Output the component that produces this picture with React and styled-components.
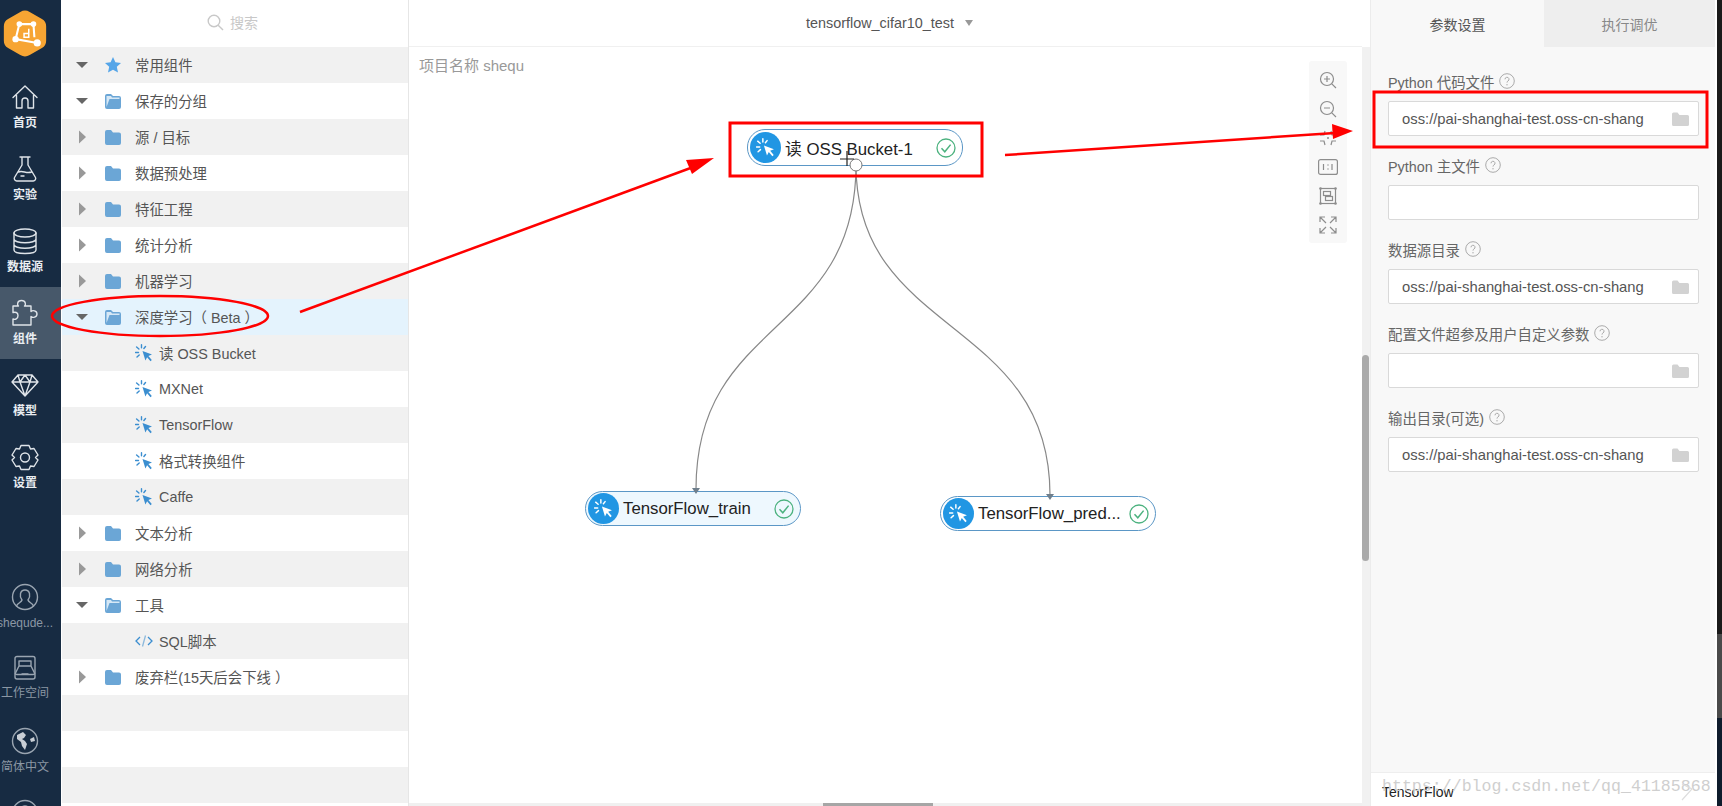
import React from 'react';
import styled, {createGlobalStyle} from 'styled-components';

const FONT = `"Liberation Sans", "Noto Sans CJK SC", sans-serif`;

const Global = createGlobalStyle`
  html, body { margin: 0; padding: 0; background: #fff; overflow: hidden; }
  body { font-family: ${FONT}; }
`;

const Page = styled.div`
  position: relative;
  width: 1722px;
  height: 806px;
  display: flex;
  overflow: hidden;
  background: #fff;
`;

/* left navy rail */
const Rail = styled.nav`
  width: 61px;
  flex: none;
  height: 806px;
  background: #172b42;
  display: flex;
  flex-direction: column;
  align-items: stretch;
  overflow: hidden;
`;
const Logo = styled.div`
  height: 71px;
  flex: none;
  padding: 10px 11px 0 0;
  box-sizing: border-box;
  display: flex;
  justify-content: center;
`;
const RailItem = styled.div`
  height: 72px;
  flex: none;
  box-sizing: border-box;
  padding: 12px 11px 0 0;
  display: flex;
  flex-direction: column;
  align-items: center;
  gap: 5px;
  line-height: 14px;
  background: ${p => (p.$active ? '#47586a' : 'transparent')};
  color: ${p => (p.$dim ? '#8b97a4' : '#e9edf1')};
  font-size: 12px;
  font-weight: ${p => (p.$dim ? 400 : 700)};
  white-space: nowrap;
`;
const RailSpacer = styled.div`
  height: 68px;
  flex: none;
`;

/* component tree */
const Tree = styled.aside`
  width: 347px;
  flex: none;
  margin-left: 1px;
  box-sizing: border-box;
  border-right: 1px solid #e6e6e6;
  display: flex;
  flex-direction: column;
  background: #fff;
`;
const SearchBar = styled.div`
  height: 47px;
  flex: none;
  box-sizing: border-box;
  display: flex;
  align-items: center;
  justify-content: center;
  gap: 6px;
  color: #c8c8c8;
  font-size: 14px;
  padding: 0 5px 3px 0;
`;
const Row = styled.div`
  height: 36px;
  flex: none;
  box-sizing: border-box;
  display: flex;
  align-items: center;
  font-size: 14.4px;
  color: #555;
  white-space: nowrap;
  background: ${p => (p.$active ? '#e4f3fd' : p.$odd ? '#f1f1f1' : '#fff')};
  padding-left: ${p => (p.$child ? 73 : 13)}px;
  padding-bottom: 1px;
`;
const Caret = styled.span`
  width: 14px;
  height: 14px;
  flex: none;
  margin-right: 15px;
  display: flex;
  align-items: center;
  justify-content: center;
`;
const RowIcon = styled.span`
  width: 18px;
  height: 18px;
  flex: none;
  margin-right: 13px;
  display: flex;
  align-items: center;
  justify-content: center;
`;
const ChildIcon = styled.span`
  width: 18px;
  height: 18px;
  flex: none;
  margin-right: 6px;
  display: flex;
  align-items: center;
  justify-content: center;
`;

/* middle work area */
const Main = styled.main`
  width: 953px;
  flex: none;
  display: flex;
  flex-direction: column;
`;
const TitleBar = styled.div`
  height: 47px;
  flex: none;
  border-bottom: 1px solid #f0f0f0;
  box-sizing: border-box;
  display: flex;
  align-items: center;
  justify-content: center;
  gap: 11px;
  font-size: 14.4px;
  color: #555;
  padding-left: 8px;
`;
const Canvas = styled.div`
  position: relative;
  flex: 1;
`;
const ProjectName = styled.div`
  padding: 7px 0 0 10px;
  font-size: 15px;
  color: #999;
`;
const ToolBox = styled.div`
  position: absolute;
  left: 900px;
  top: 14px;
  width: 38px;
  height: 182px;
  background: #f8f8f8;
  border-radius: 3px;
  display: flex;
  flex-direction: column;
  align-items: center;
  padding-top: 4px;
  box-sizing: border-box;
`;
const ToolCell = styled.div`
  height: 29px;
  flex: none;
  display: flex;
  align-items: center;
  justify-content: center;
`;
const Node = styled.div`
  position: absolute;
  left: ${p => p.$x}px;
  top: ${p => p.$y}px;
  width: 216px;
  height: ${p => p.$h}px;
  box-sizing: border-box;
  border: 1px solid #5b97c6;
  border-radius: 18px;
  background: ${p => p.$bg || '#fff'};
  display: flex;
  align-items: center;
  padding: 0 6px 0 2px;
  font-size: 16.8px;
  color: #222;
  white-space: nowrap;
`;
const NodeBadge = styled.span`
  width: 31px;
  height: 31px;
  border-radius: 50%;
  background: #2196e3;
  flex: none;
  display: flex;
  align-items: center;
  justify-content: center;
  margin-right: 4px;
`;
const NodeLabel = styled.span`
  flex: 1;
  min-width: 0;
`;
const Wires = styled.svg`
  position: absolute;
  left: 0;
  top: 0;
  pointer-events: none;
`;
const BottomTrack = styled.div`
  position: absolute;
  left: 0;
  right: 0;
  bottom: 0;
  height: 3px;
  background: #f0f0f0;
`;
const BottomThumb = styled.div`
  width: 110px;
  height: 3px;
  margin-left: 414px;
  background: #a6a6a6;
`;

/* canvas scrollbar strip */
const ScrollTrack = styled.div`
  width: 8px;
  flex: none;
  margin-top: 47px;
  background: #f1f1f1;
  padding-top: 308px;
  box-sizing: border-box;
`;
const ScrollThumb = styled.div`
  width: 7px;
  height: 206px;
  border-radius: 4px;
  background: #aaa;
`;

/* right panel */
const Panel = styled.section`
  width: 345px;
  flex: none;
  margin-right: 2px;
  background: #f8f8f8;
  display: flex;
  flex-direction: column;
  border-left: 1px solid #ececec;
  box-sizing: border-box;
`;
const Tabs = styled.div`
  height: 47px;
  flex: none;
  display: flex;
`;
const Tab = styled.div`
  flex: ${p => (p.$on ? '0 0 173px' : 1)};
  display: flex;
  align-items: center;
  justify-content: center;
  font-size: 14px;
  color: ${p => (p.$on ? '#555' : '#888')};
  background: ${p => (p.$on ? '#f8f8f8' : '#eee')};
`;
const Form = styled.div`
  flex: 1;
  padding: 22px 16px 0 17px;
  display: flex;
  flex-direction: column;
`;
const Field = styled.div`
  height: 84px;
  flex: none;
`;
const Label = styled.div`
  height: 24px;
  display: flex;
  align-items: center;
  gap: 5px;
  font-size: 14.4px;
  color: #666;
  margin-bottom: 8px;
`;
const Input = styled.div`
  height: 35px;
  box-sizing: border-box;
  background: #fff;
  border: 1px solid #d9d9d9;
  border-radius: 2px;
  display: flex;
  align-items: center;
  padding: 0 9px 0 13px;
  font-size: 14.8px;
  color: #555;
  white-space: nowrap;
`;
const InputIcon = styled.span`
  margin-left: auto;
  display: flex;
`;
const Footer = styled.div`
  position: relative;
  height: 34px;
  flex: none;
  background: #fff;
  border-top: 1px solid #eee;
  box-sizing: border-box;
  display: flex;
  align-items: center;
  padding: 4px 0 0 11px;
  font-size: 14px;
  color: #222;
`;
const Watermark = styled.span`
  position: absolute;
  left: 11px;
  top: 0;
  font-family: "Liberation Mono", monospace;
  font-size: 16.6px;
  color: #cfcfcf;
  line-height: 28px;
  white-space: nowrap;
`;
const WaterChevron = styled.svg`
  position: absolute;
  left: 310px;
  top: 10px;
`;
const EdgeStrip = styled.div`
  width: 5px;
  flex: none;
  background: linear-gradient(#1a1a1a 0, #1a1a1a 634px, #4a4a4a 634px, #4a4a4a 718px, #0f1c2c 718px);
`;
const Overlay = styled.svg`
  position: absolute;
  left: 0;
  top: 0;
  pointer-events: none;
`;

const Svg = ({w, h = w, box, children}) => (
  <svg width={w} height={h} viewBox={box || `0 0 ${w} ${h}`} fill="none">{children}</svg>
);

const CaretIcon = ({open}) => open
  ? <Svg w={14}><path d="M1 4h12L7 10z" fill="#666"/></Svg>
  : <Svg w={14}><path d="M4 0.5l7 6.5-7 6.5z" fill="#999"/></Svg>;

const Folder = ({open}) => open
  ? <Svg w={18} h={16}>
      <path d="M1 3a2 2 0 0 1 2-2h4l2 2h6a2 2 0 0 1 2 2v9a2 2 0 0 1-2 2H3a2 2 0 0 1-2-2z" fill="#6ba6d6"/>
      <path d="M2.500 14V3h4.500l1 1.500h7.500V6H5.500z" fill="#d6e8f6"/>
    </Svg>
  : <Svg w={18} h={16}>
      <path d="M1 3a2 2 0 0 1 2-2h4l2 2.500h6a2 2 0 0 1 2 2V14a2 2 0 0 1-2 2H3a2 2 0 0 1-2-2z" fill="#6ba6d6"/>
    </Svg>;

const Star = () => (
  <Svg w={18}><path d="M9 1l2.400 5.300 5.600.6-4.200 3.900 1.200 5.700L9 13.700l-5 2.800 1.200-5.700L1 6.900l5.600-.6z" fill="#55a5e8"/></Svg>
);

const Cursor = ({color = '#3b8ed0', spark = '#3b8ed0', size = 18}) => (
  <Svg w={size} box="0 0 18 18">
    <path d="M7.500 7l9.500 3.600-3.600 1.500 3.400 4-1.300 1.100-3.400-4-1.700 3.400z" fill={color}/>
    <path d="M6.500 0.800v3M1.600 3l2.300 2M0.500 8.500h3M2 13l2.200-2M10.500 2.500l-1.600 2" stroke={spark} strokeWidth="1.400" strokeLinecap="round"/>
  </Svg>
);

const Code = () => (
  <Svg w={18} h={14}>
    <path d="M5 3L1 7l4 4M13 3l4 4-4 4" stroke="#3b8ed0" strokeWidth="1.300"/>
    <path d="M10.500 1.500l-3 11" stroke="#8cb9dc" strokeWidth="1.300"/>
  </Svg>
);

const Check = () => (
  <Svg w={20}>
    <circle cx="10" cy="10" r="9" stroke="#4cb27f" strokeWidth="1.300"/>
    <path d="M5.500 10.200l3.300 3.600 5.800-7.200" stroke="#4cb27f" strokeWidth="1.500"/>
  </Svg>
);

const Help = () => (
  <Svg w={16}>
    <circle cx="8" cy="8" r="7.300" stroke="#aaa" strokeWidth="1"/>
    <path d="M6 6.300a2 2 0 1 1 3 1.700c-.7.4-1 .8-1 1.600" stroke="#aaa" strokeWidth="1"/>
    <circle cx="8" cy="11.800" r=".7" fill="#aaa"/>
  </Svg>
);

const GrayFolder = () => (
  <Svg w={17} h={14}>
    <path d="M0 2a1.500 1.500 0 0 1 1.500-1.500h4L7.500 3h8A1.500 1.500 0 0 1 17 4.500v8a1.500 1.500 0 0 1-1.500 1.500h-14A1.500 1.500 0 0 1 0 12.500z" fill="#d2d2d2"/>
  </Svg>
);

const railStroke = {stroke: '#dfe4e9', strokeWidth: 1.400, fill: 'none', strokeLinejoin: 'round', strokeLinecap: 'round'};
const dimStroke = {...railStroke, stroke: '#9aa5b1'};

const HomeIcon = () => (
  <Svg w={28}>
    <path d="M2 14.500L14 3l12 11.500M5.500 12.500V25h5.500v-7a3 3 0 0 1 6 0v7h5.500V12.500" {...railStroke}/>
  </Svg>
);
const FlaskIcon = () => (
  <Svg w={28}>
    <path d="M9 2h10M11 2v8L3.500 22.500A2.500 2.500 0 0 0 6 26h16a2.500 2.500 0 0 0 2.500-3.500L17 10V2M7.500 17c4-2 8 2 13 0M10 21h3" {...railStroke}/>
  </Svg>
);
const DbIcon = () => (
  <Svg w={28}>
    <ellipse cx="14" cy="6" rx="11" ry="4" {...railStroke}/>
    <path d="M3 6v17c0 2.200 5 3.500 11 3.500s11-1.300 11-3.500V6M3 12c0 2.200 5 3.800 11 3.800s11-1.600 11-3.800M3 17.500c0 2.200 5 3.800 11 3.800s11-1.600 11-3.800" {...railStroke}/>
  </Svg>
);
const PuzzleIcon = () => (
  <Svg w={28}>
    <path d="M2 7h5.500c-1.500-1-1.500-5.500 3-5.500s4.500 4.500 3 5.500H20v5.500c1.500-1.500 6-1 6 2.500s-4.500 4-6 2.500V26H2v-6c2 1 5 0 5-3.500s-3-3.500-5-3z" {...railStroke}/>
  </Svg>
);
const GemIcon = () => (
  <Svg w={28}>
    <path d="M7 4h14l6 7-13 14L1 11zM1 11h26M9 11l5 14 5-14M7 4l2 7 5-7 5 7 2-7" {...railStroke}/>
  </Svg>
);
const GearIcon = () => (
  <Svg w={28}>
    <path d="M10 2.500h8l1.500 3.500 3.500-.5 4 6.500-2.500 2.500 2.500 2.500-4 6.500-3.500-.5-1.500 3.500h-8l-1.500-3.500-3.500.5-4-6.500 2.500-2.500-2.500-2.500 4-6.500 3.500.5z" {...railStroke}/>
    <circle cx="14" cy="14.500" r="4.500" {...railStroke}/>
  </Svg>
);
const UserIcon = () => (
  <Svg w={28}>
    <circle cx="14" cy="14" r="12.500" {...dimStroke}/>
    <path d="M5.500 23c1-3 5-3.500 5.500-6-3-4-2-10 3-10s6 6 3 10c.5 2.500 4.500 3 5.500 6" {...dimStroke}/>
  </Svg>
);
const WorkIcon = () => (
  <Svg w={26}>
    <rect x="3" y="1.500" width="20" height="18" rx="2" {...dimStroke}/>
    <path d="M7 6h12v5H7zM7 11l-4 8M19 11l4 8M3 19v3a2 2 0 0 0 2 2h16a2 2 0 0 0 2-2v-3M10 19h6" {...dimStroke}/>
  </Svg>
);
const GlobeIcon = () => (
  <Svg w={28}>
    <circle cx="14" cy="14" r="12.500" {...dimStroke}/>
    <path d="M6 8l6-3 3 3-2 3-2 1 3 2 2 3-2 6-3-4-1-4-4-3zM19 12l4-2 1 4-4 1z" fill="#c8ced5"/>
  </Svg>
);

const LogoIcon = () => (
  <Svg w={44} h={47} box="0 0 46 50">
    <path d="M18 2a10 10 0 0 1 10 0l13 7.500a9 9 0 0 1 4.500 8v15a9 9 0 0 1-4.500 8L28 48a10 10 0 0 1-10 0L5 40.500a9 9 0 0 1-4.500-8v-15a9 9 0 0 1 4.500-8z" fill="#f7a533"/>
    <path d="M17 15h15l1 14M17 15l-4 16 23 4" stroke="#fff" strokeWidth="2.200"/>
    <path d="M27 20v9h-5v-4h5" stroke="#fff" strokeWidth="1.600"/>
    <circle cx="17" cy="15" r="3" fill="#fff"/>
    <circle cx="32" cy="15" r="3" fill="#fff"/>
    <circle cx="13" cy="31" r="3.400" fill="#fff"/>
    <circle cx="36" cy="35" r="3.800" fill="#fff"/>
  </Svg>
);

const toolStroke = {stroke: '#8d8d8d', strokeWidth: 1.200, fill: 'none'};
const tools = [
  <Svg w={18}><circle cx="8" cy="8" r="6.500" {...toolStroke}/><path d="M5 8h6M8 5v6M12.800 12.800L17 17" {...toolStroke}/></Svg>,
  <Svg w={18}><circle cx="8" cy="8" r="6.500" {...toolStroke}/><path d="M5 8h6M12.800 12.800L17 17" {...toolStroke}/></Svg>,
  <Svg w={18}><path d="M1 6h4l1-4M17 6h-4l-1-4M1 12h4l1 4M17 12h-4l-1 4" {...toolStroke}/><circle cx="9" cy="9" r="1" fill="#8d8d8d"/></Svg>,
  <Svg w={20} h={16}><rect x=".6" y=".6" width="18.800" height="14.800" rx="2" {...toolStroke}/><path d="M5.500 5v6M14 5v6" {...toolStroke}/><circle cx="10" cy="6" r=".7" fill="#8d8d8d"/><circle cx="10" cy="10" r=".7" fill="#8d8d8d"/></Svg>,
  <Svg w={18}><rect x="1.500" y="1.500" width="15" height="15" {...toolStroke}/><rect x="4.500" y="4.500" width="7" height="4" {...toolStroke}/><rect x="6.500" y="9.500" width="7" height="4" {...toolStroke}/><circle cx="1.500" cy="1.500" r="1.300" fill="#8d8d8d"/><circle cx="16.500" cy="1.500" r="1.300" fill="#8d8d8d"/><circle cx="1.500" cy="16.500" r="1.300" fill="#8d8d8d"/><circle cx="16.500" cy="16.500" r="1.300" fill="#8d8d8d"/></Svg>,
  <Svg w={18}><path d="M1 6V1h5M1 1l6 6M17 6V1h-5M17 1l-6 6M1 12v5h5M1 17l6-6M17 12v5h-5M17 17l-6-6" {...toolStroke}/></Svg>,
];

const rows = [
  {label: '常用组件', open: true, icon: 'star'},
  {label: '保存的分组', open: true, icon: 'open'},
  {label: '源 / 目标'},
  {label: '数据预处理'},
  {label: '特征工程'},
  {label: '统计分析'},
  {label: '机器学习'},
  {label: '深度学习（ Beta ）', open: true, icon: 'open', active: true},
  {label: '读 OSS Bucket', child: 'cursor'},
  {label: 'MXNet', child: 'cursor'},
  {label: 'TensorFlow', child: 'cursor'},
  {label: '格式转换组件', child: 'cursor'},
  {label: 'Caffe', child: 'cursor'},
  {label: '文本分析'},
  {label: '网络分析'},
  {label: '工具', open: true, icon: 'open'},
  {label: 'SQL脚本', child: 'code'},
  {label: '废弃栏(15天后会下线 ）'},
  {label: ''},
  {label: ''},
  {label: ''},
];

const OSS = 'oss://pai-shanghai-test.oss-cn-shang';
const fields = [
  {label: 'Python 代码文件', value: OSS, folder: true},
  {label: 'Python 主文件', value: ''},
  {label: '数据源目录', value: OSS, folder: true},
  {label: '配置文件超参及用户自定义参数', value: '', folder: true},
  {label: '输出目录(可选)', value: OSS, folder: true},
];

const TreeRow = ({row, odd}) => {
  if (row.child) {
    return (
      <Row $child $odd={odd}>
        <ChildIcon>{row.child === 'code' ? <Code/> : <Cursor/>}</ChildIcon>
        {row.label}
      </Row>
    );
  }
  if (!row.label) return <Row $odd={odd}/>;
  return (
    <Row $odd={odd} $active={row.active}>
      <Caret><CaretIcon open={row.open}/></Caret>
      <RowIcon>{row.icon === 'star' ? <Star/> : <Folder open={row.icon === 'open'}/>}</RowIcon>
      {row.label}
    </Row>
  );
};

const FlowNode = ({label, ...rest}) => (
  <Node {...rest}>
    <NodeBadge><Cursor color="#fff" spark="#fff" size={19}/></NodeBadge>
    <NodeLabel>{label}</NodeLabel>
    <Check/>
  </Node>
);

export default function App() {
  return (
    <Page>
      <Global/>
      <Rail>
        <Logo><LogoIcon/></Logo>
        <RailItem><HomeIcon/>首页</RailItem>
        <RailItem><FlaskIcon/>实验</RailItem>
        <RailItem><DbIcon/>数据源</RailItem>
        <RailItem $active><PuzzleIcon/>组件</RailItem>
        <RailItem><GemIcon/>模型</RailItem>
        <RailItem><GearIcon/>设置</RailItem>
        <RailSpacer/>
        <RailItem $dim><UserIcon/>shequde...</RailItem>
        <RailItem $dim><WorkIcon/>工作空间</RailItem>
        <RailItem $dim><GlobeIcon/>简体中文</RailItem>
        <RailItem $dim><UserIcon/></RailItem>
      </Rail>

      <Tree>
        <SearchBar>
          <Svg w={17}><circle cx="7" cy="7" r="5.800" stroke="#c8c8c8" strokeWidth="1.400"/><path d="M11.200 11.200L16 16" stroke="#c8c8c8" strokeWidth="1.400"/></Svg>
          搜索
        </SearchBar>
        {rows.map((row, i) => <TreeRow key={i} row={row} odd={i % 2 === 0}/>)}
      </Tree>

      <Main>
        <TitleBar>
          tensorflow_cifar10_test
          <Svg w={8} h={6}><path d="M0 0h8L4 6z" fill="#999"/></Svg>
        </TitleBar>
        <Canvas>
          <ProjectName>项目名称 shequ</ProjectName>
          <Wires width="953" height="759">
            <path d="M447 118C447 290 287 270 287 442M447 118C447 290 641 270 641 448" stroke="#888" strokeWidth="1.200" fill="none"/>
          </Wires>
          <ToolBox>{tools.map((t, i) => <ToolCell key={i}>{t}</ToolCell>)}</ToolBox>
          <FlowNode label="读 OSS Bucket-1" $x={338} $y={82} $h={37}/>
          <FlowNode label="TensorFlow_train" $x={176} $y={444} $h={35} $bg="#eef8fe"/>
          <FlowNode label="TensorFlow_pred..." $x={531} $y={449} $h={35}/>
          <Wires width="953" height="759">
            <path d="M283 441h8l-4 6zM637 447h8l-4 6z" fill="#6f7f8c"/>
            <circle cx="447" cy="118" r="6" fill="#fff" stroke="#777" strokeWidth="1"/>
            <path d="M431 112h14M438 104v15" stroke="#222" strokeWidth="1.200"/>
          </Wires>
          <BottomTrack><BottomThumb/></BottomTrack>
        </Canvas>
      </Main>

      <ScrollTrack><ScrollThumb/></ScrollTrack>

      <Panel>
        <Tabs>
          <Tab $on>参数设置</Tab>
          <Tab>执行调优</Tab>
        </Tabs>
        <Form>
          {fields.map(f => (
            <Field key={f.label}>
              <Label>{f.label}<Help/></Label>
              <Input>{f.value}{f.folder && <InputIcon><GrayFolder/></InputIcon>}</Input>
            </Field>
          ))}
        </Form>
        <Footer>
          <Watermark>https://blog.csdn.net/qq_41185868</Watermark>
          <WaterChevron width="12" height="18" viewBox="0 0 12 18" fill="none">
            <path d="M1 1l10 5-10 11" stroke="#ddd" strokeWidth="1.200"/>
          </WaterChevron>
          TensorFlow
        </Footer>
      </Panel>
      <EdgeStrip/>

      <Overlay width="1722" height="806">
        <ellipse cx="160" cy="316" rx="108" ry="20" stroke="#f00" strokeWidth="2.500" fill="none"/>
        <rect x="730" y="123" width="252" height="53" stroke="#f00" strokeWidth="3" fill="none"/>
        <rect x="1374" y="92" width="333" height="55" stroke="#f00" strokeWidth="3" fill="none"/>
        <path d="M300 312L696 166" stroke="#f00" strokeWidth="2.500"/>
        <path d="M714 158L686 160L692 174z" fill="#f00"/>
        <path d="M1005 155L1335 133" stroke="#f00" strokeWidth="2.500"/>
        <path d="M1353 131L1332 124L1333 139z" fill="#f00"/>
      </Overlay>
    </Page>
  );
}
